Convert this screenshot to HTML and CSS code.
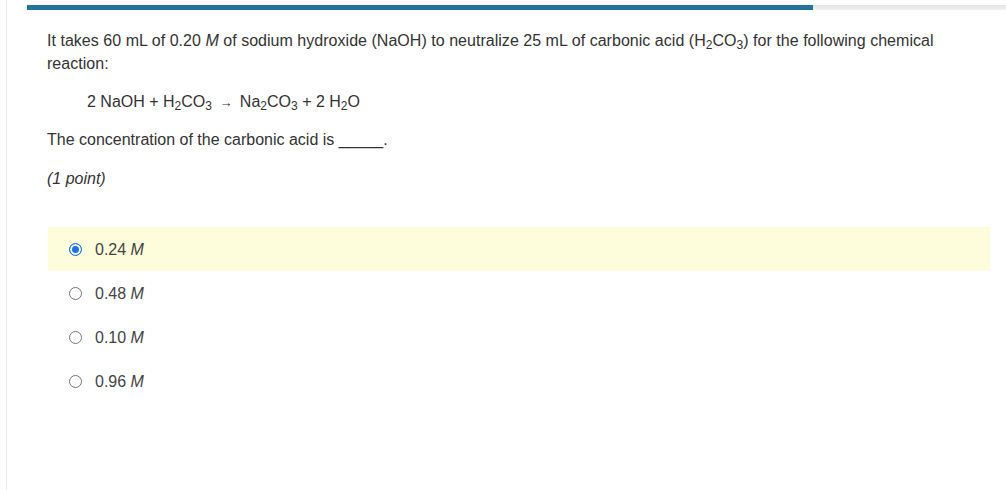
FILE: index.html
```html
<!DOCTYPE html>
<html>
<head>
<meta charset="utf-8">
<link rel="stylesheet" href="styles.css">
</head>
<body>
<div class="page">
  <div class="progress"><div class="progress-fill" style="width: 80.3%"></div></div>
  <div class="question">
    <p class="stem">It takes 60 mL of 0.20 <i>M</i> of sodium hydroxide (NaOH) to neutralize 25 mL of carbonic acid (H<sub>2</sub>CO<sub>3</sub>) for the following chemical reaction:</p>
    <p class="equation">2 NaOH + H<sub>2</sub>CO<sub>3</sub> <span class="arrow">&rarr;</span> Na<sub>2</sub>CO<sub>3</sub> + 2 H<sub>2</sub>O</p>
    <p class="prompt">The concentration of the carbonic acid is _____.</p>
    <p class="points"><i>(1 point)</i></p>
    <div class="options">
      <div class="option selected"><span class="radio"></span><span class="label">0.24 <i>M</i></span></div>
      <div class="option"><span class="radio"></span><span class="label">0.48 <i>M</i></span></div>
      <div class="option"><span class="radio"></span><span class="label">0.10 <i>M</i></span></div>
      <div class="option"><span class="radio"></span><span class="label">0.96 <i>M</i></span></div>
    </div>
  </div>
</div>
</body>
</html>
```

FILE: styles.css
```css
html, body {
  margin: 0;
  padding: 0;
  background: #fff;
}
body {
  font-family: "Liberation Sans", Arial, sans-serif;
  font-size: 16px;
  color: #333;
}
.page {
  margin-left: 6px;
  border-left: 1px solid #ececec;
  min-height: 490px;
  padding-top: 5px;
  box-sizing: border-box;
}
.progress {
  margin-left: 20px;
  height: 5px;
  background: linear-gradient(#e2e2e2, #f4f4f4);
}
.progress-fill {
  height: 100%;
  background: #24729e;
}
.question {
  padding: 19px 16px 0 40px;
}
.question p {
  margin: 0;
  line-height: 23px;
}
.stem {
  letter-spacing: 0.03px;
}
sub {
  font-size: 12px;
  line-height: 0;
  vertical-align: -3px;
}
.equation {
  margin-top: 15px !important;
  padding-left: 40px;
}
.arrow {
  font-size: 13px;
  padding: 0 3px;
}
.prompt {
  margin-top: 14px !important;
}
.points {
  margin-top: 16px !important;
}
.options {
  margin-top: 37px;
  margin-left: 1px;
}
.option {
  display: flex;
  align-items: center;
  height: 44px;
  padding-left: 21px;
  color: #444;
}
.option.selected {
  background: #fdfddb;
}
.radio {
  width: 11px;
  height: 11px;
  border: 1px solid #767676;
  border-radius: 50%;
  box-sizing: content-box;
  margin-right: 13px;
  background: #fff;
}
.option.selected .radio {
  border-color: #1a6fd8;
  background: #1a73e8;
  box-shadow: inset 0 0 0 2px #fff;
}
.label {
  line-height: 20px;
  padding-top: 1px;
}
```
